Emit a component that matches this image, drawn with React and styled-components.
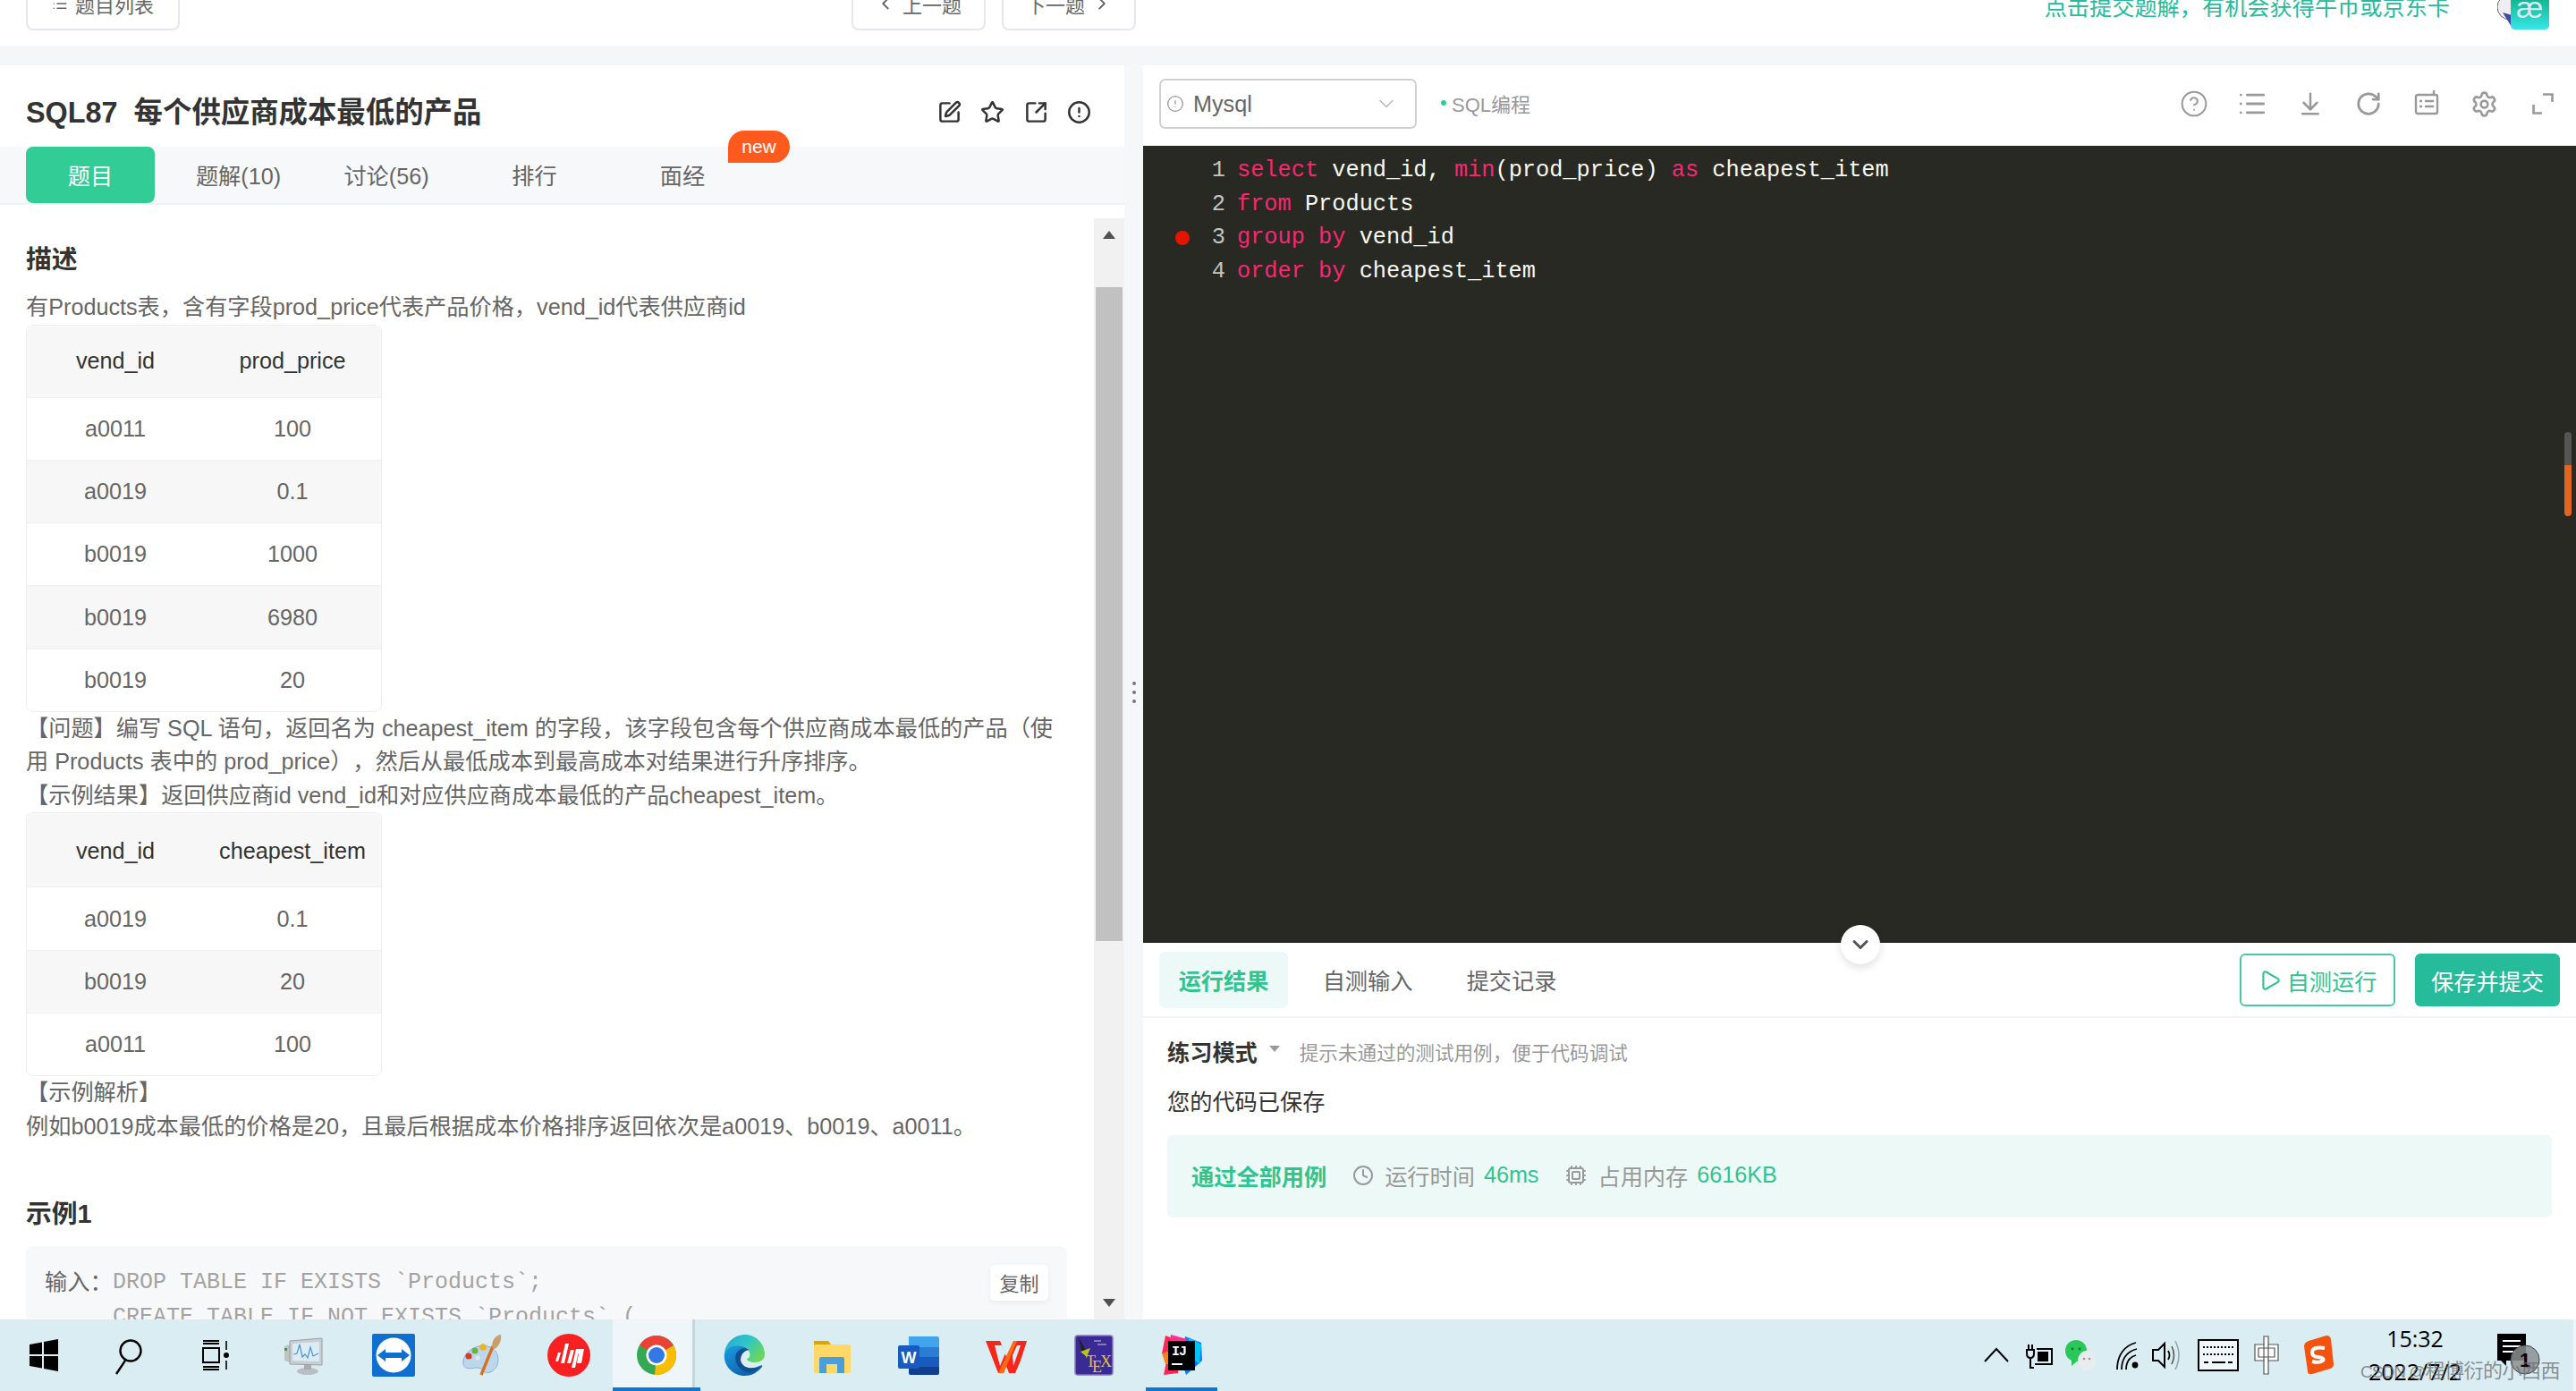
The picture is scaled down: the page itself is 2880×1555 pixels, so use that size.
import React from 'react';
import styled, { createGlobalStyle } from 'styled-components';
import {
  SquarePen, Star, SquareArrowOutUpRight, CircleAlert, CircleHelp, RotateCw, Settings,
  ChevronLeft, ChevronRight, ChevronDown, Play, Clock, Cpu, List, ArrowDownToLine,
} from 'lucide-react';

const Global = createGlobalStyle`
  * { box-sizing: border-box; }
  html, body { margin: 0; padding: 0; height: 100%; overflow: hidden; }
  body { font-family: "Liberation Sans", "Noto Sans CJK SC", sans-serif; background: #f6f7f9; color: #666; text-spacing-trim: space-all; }
`;

const Page = styled.div`
  width: 2880px; height: 1555px; display: flex; flex-direction: column; overflow: hidden; position: relative;
`;

/* top bar */
const TopBar = styled.header`
  height: 51px; flex: none; background: #fff; display: flex; align-items: flex-end; padding: 0 30px 17px 29px; overflow: hidden;
`;
const TopButton = styled.button`
  height: 56px; width: ${p => p.$w}px; flex: none; margin-left: ${p => p.$ml || 0}px; background: #fff;
  border: 2px solid #e6e6ee; border-radius: 8px; color: #666; font: 22px "Liberation Sans", "Noto Sans CJK SC", sans-serif;
  display: flex; align-items: center; justify-content: center; gap: 8px; padding: 0 0 5px;
`;
const Promo = styled.span`
  margin-left: auto; font-size: 25.2px; line-height: 24px; color: #25bb9b; margin-bottom: 14px; white-space: nowrap;
`;
const Avatar = styled.svg`
  width: 58px; height: 33px; margin-left: 53px; margin-bottom: 1px; flex: none; display: block;
`;

/* main */
const Spacer = styled.div` height: 22px; flex: none; background: #f5f6f8; `;
const Main = styled.main`
  flex: 1; min-height: 0; display: grid; grid-template-columns: 1257px 21px 1fr;
`;
const LeftPanel = styled.section` background: #fff; display: flex; flex-direction: column; min-height: 0; `;
const TitleRow = styled.div`
  height: 91px; flex: none; display: flex; align-items: center; justify-content: space-between; padding: 13px 37px 0 29px;
`;
const Title = styled.h1`
  margin: 2px 0 0; font-size: 32.4px; line-height: 40px; font-weight: 700; color: #333; white-space: pre;
`;
const TitleIcons = styled.div` display: flex; gap: 21.5px; color: #333; align-items: center; padding-top: 1px;`;
const Tabs = styled.nav`
  height: 65px; flex: none; background: #f7f8fa; border-bottom: 2px solid #f0f1f3; display: flex; gap: 21.5px; padding-left: 29px;
`;
const Tab = styled.div`
  width: 144px; height: 63px; display: flex; align-items: center; justify-content: center; position: relative; padding-bottom: 2px;
  font-size: 25.2px; border-radius: 8px; color: ${p => (p.$active ? '#fff' : '#666')}; background: ${p => (p.$active ? '#32cc96' : 'transparent')};
`;
const Badge = styled.span`
  position: absolute; left: 123px; top: -18px; width: 69px; height: 36px; background: #ff5a1d; color: #fff; font-size: 21px;
  display: flex; align-items: center; justify-content: center; border-radius: 18px 18px 18px 0;
`;
const BodyRow = styled.div` flex: 1; min-height: 0; display: flex; overflow: hidden; `;
const Article = styled.article`
  width: 1223px; flex: none; padding: 43px 30px 0 29px; overflow: hidden;
`;
const Heading = styled.h2`
  margin: ${p => p.$mt || 0}px 0 ${p => p.$mb || 0}px; font-size: 28.8px; line-height: 37px; font-weight: 700; color: #333;
`;
const Para = styled.p` margin: 0; font-size: 25.2px; line-height: 37.5px; color: #666; `;
const DataTable = styled.table`
  width: 398px; border-collapse: separate; border-spacing: 0; border: 1px solid #eee; border-radius: 8px; font-size: 25.2px; text-align: center; table-layout: fixed;
  th { height: ${p => p.$head}px; font-weight: 400; color: #333; background: #f7f7f7; padding: ${p => p.$pad}px 0 0; }
  td { height: 70.3px; padding: 0; color: #666; border-top: 1px solid #f0f0f0; }
  tr:nth-child(even) td { background: #f7f7f7; }
`;
const CodeBlock = styled.div`
  margin-top: 17px; height: 110px; background: #f7f8fa; border-radius: 8px; position: relative; padding: 21px 0 0 21px; display: flex;
`;
const InputLabel = styled.span` font-size: 25.2px; line-height: 38px; color: #666; width: 76px; flex: none; `;
const Mono = styled.pre`
  margin: 0; font: 25px/39px "Liberation Mono", monospace; color: #a3a3a3;
`;
const CopyBtn = styled.span`
  position: absolute; right: 21px; top: 21px; width: 65px; height: 40px; background: #fff; border-radius: 5px; font-size: 22px; color: #666; padding-bottom: 2px;
  display: flex; align-items: center; justify-content: center; box-shadow: 0 2px 6px rgba(0,0,0,.06);
`;
const ScrollTrack = styled.div`
  width: 34px; flex: none; margin-top: 15px; background: #f1f1f1; display: flex; flex-direction: column; align-items: center;
`;
const ScrollArrow = styled.span`
  width: 0; height: 0; border-left: 7px solid transparent; border-right: 7px solid transparent; flex: none;
  ${p => (p.$down ? 'border-top: 9px solid #505050; margin-top: auto; margin-bottom: 14px;' : 'border-bottom: 9px solid #505050; margin-top: 14px;')}
`;
const ScrollThumb = styled.div` width: 30px; height: 731px; margin-top: 54px; background: #c1c1c1; flex: none; `;

/* splitter */
const Splitter = styled.div`
  background: #f6f7f9; display: flex; flex-direction: column; align-items: center; justify-content: center; gap: 6px;
`;
const Dot = styled.i` width: 4px; height: 4px; border-radius: 50%; background: #777; display: block; `;

/* right */
const RightPanel = styled.section` background: #fff; display: flex; flex-direction: column; min-height: 0; `;
const EditorBar = styled.div`
  height: 90px; flex: none; display: flex; align-items: center; padding: 0 5px 4px 18px;
`;
const SelectBox = styled.div`
  width: 288px; height: 56px; border: 2px solid #d0d0d0; border-radius: 7px; display: flex; align-items: center; padding: 0 18px 0 6px; gap: 10px;
  font-size: 25.2px; color: #666; flex: none;
  svg:last-child { margin-left: auto; color: #bbb; }
`;
const Kind = styled.span`
  margin: 0 0 3px 27px; font-size: 22px; color: #999; display: flex; align-items: center; gap: 6px;
  &::before { content: ''; width: 6px; height: 6px; border-radius: 50%; background: #32ca99; }
`;
const Tools = styled.div` margin-left: auto; display: flex; color: #999; `;
const ToolCell = styled.span`
  width: 65px; flex: none; display: flex; align-items: center; justify-content: center;
  svg { display: block; }
`;
const Editor = styled.div`
  height: 891px; flex: none; background: #282923; padding-top: 9px; position: relative;
`;
const Line = styled.div`
  height: 37.5px; display: flex; align-items: center; font: 25.3px/37.5px "Liberation Mono", monospace; color: #f8f8f2; white-space: pre;
`;
const Gutter = styled.span`
  width: 92px; flex: none; display: flex; align-items: center; padding-left: 36px; color: #c4c4c0; margin-right: 13px;
`;
const LineNo = styled.span` margin-left: auto; `;
const Breakpoint = styled.i` width: 16px; height: 16px; border-radius: 50%; background: #e51400; display: block; `;
const Kw = styled.span` color: #f92672; `;
const Ruler = styled.div`
  position: absolute; right: 5px; top: 320px; width: 8px; height: 94px; border-radius: 4px;
  background: linear-gradient(#555 0, #555 39%, #e2641f 39%, #e2641f 100%);
`;
const ResultBar = styled.div`
  height: 84px; flex: none; display: flex; align-items: center; padding: 0 18px; border-bottom: 2px solid #f2f3f5; position: relative; gap: 17px;
`;
const ResTab = styled.div`
  width: 144px; height: 63px; flex: none; display: flex; align-items: center; justify-content: center; border-radius: 7px; font-size: 25.2px;
  font-weight: ${p => (p.$active ? 700 : 400)}; color: ${p => (p.$active ? '#32c48f' : '#666')}; background: ${p => (p.$active ? '#ecf9f6' : 'transparent')};
`;
const Collapse = styled.div`
  position: absolute; left: 780px; top: -20px; width: 44px; height: 44px; border-radius: 50%; background: #fff; color: #555;
  display: flex; align-items: center; justify-content: center; box-shadow: 0 4px 10px rgba(0,0,0,.12);
`;
const RunBtn = styled.button`
  width: 174px; height: 59px; flex: none; margin-left: auto; background: #fff; border: 2px solid #4cc7a3; border-radius: 6px; color: #32c48f;
  font: 25.2px "Liberation Sans", "Noto Sans CJK SC", sans-serif; display: flex; align-items: center; justify-content: center; gap: 6px; padding: 1px 0 0;
`;
const SubmitBtn = styled.button`
  width: 162px; height: 59px; flex: none; margin-left: 5px; background: #25bb9b; border: 0; border-radius: 6px; color: #fff;
  font: 25.2px "Liberation Sans", "Noto Sans CJK SC", sans-serif; padding: 1px 0 0;
`;
const Result = styled.div` padding: 18px 27px 0 27px; `;
const ModeRow = styled.div` display: flex; align-items: center; height: 38px; `;
const Mode = styled.b` font-size: 25.2px; color: #333; `;
const Caret = styled.i`
  width: 0; height: 0; border-left: 6px solid transparent; border-right: 6px solid transparent; border-top: 7px solid #999; margin: 0 22px 6px 13px; display: block;
`;
const Hint = styled.span` font-size: 21.6px; color: #999; `;
const Saved = styled.div` font-size: 25.2px; color: #333; line-height: 38px; margin-top: 19px; `;
const PassBox = styled.div`
  margin-top: 18px; height: 92px; background: #ecf9f6; border-radius: 6px; display: flex; align-items: center; padding: 0 27px 3px; font-size: 25.2px; color: #999;
`;
const Pass = styled.b` color: #32c48f; margin-right: 29px; `;
const Stat = styled.span`
  display: flex; align-items: center; gap: 10px; margin-right: 30px;
  svg { margin-right: 2px; }
  em { font-style: normal; color: #32c48f; }
`;

/* taskbar */
const Taskbar = styled.footer`
  height: 80px; flex: none; background: #d9edf3; display: flex; align-items: stretch; position: relative; border-right: 3px solid #f1f6f8;
`;
const Slot = styled.div`
  width: 97.85px; flex: none; display: flex; align-items: center; justify-content: center; position: relative;
  background: ${p => (p.$running ? 'linear-gradient(90deg,#eef6f9 0,#eef6f9 91%,#c5d6dc 91%,#c5d6dc 94%,#d9edf3 94%)' : 'transparent')};
  ${p => p.$running && `border-bottom: 4px solid #0a78d4; padding-top: 4px;`}
  ${p => p.$underline && `&::after { content:''; position:absolute; left: 9px; right: 9px; bottom: 0; height: 4px; background:#0a78d4; }`}
  svg { display: block; }
`;
const Tray = styled.div` margin-left: auto; display: flex; align-items: stretch; margin-right: 8px; `;
const TrayItem = styled.div`
  width: ${p => p.$w}px; flex: none; display: flex; align-items: center; justify-content: center; position: relative;
  svg { display: block; overflow: visible; }
`;
const ClockBox = styled.div`
  width: 122px; flex: none; display: flex; flex-direction: column; align-items: center; color: #000; font: 25px/37px "Open Sans", "Liberation Sans", sans-serif; padding-top: 3px; white-space: nowrap;
`;
const Watermark = styled.span`
  position: absolute; right: 15px; bottom: 6px; font-size: 22px; letter-spacing: -0.5px; line-height: 30px; color: rgba(110,110,110,.75); white-space: nowrap;
`;
const WatermarkHandle = styled.span` font-size: 19px; letter-spacing: -1px; `;

const I = ({ children, s = 48, vb = 48 }) => <svg width={s} height={s} viewBox={`0 0 ${vb} ${vb}`} fill="none">{children}</svg>;

const WinIcon = () => (<I><path fill="#000" d="M8 12 L22 9.5 V23 H8Z M24 9 L40 6 V23 H24Z M8 25 H22 V38.5 L8 36Z M24 25 H40 V42 L24 39Z" /></I>);
const SearchIcon = () => (<I><circle cx="23" cy="19" r="11.5" stroke="#000" strokeWidth="2.4" /><path d="M17 30 L7 45" stroke="#000" strokeWidth="2.4" /></I>);
const TaskIcon = () => (<I><path d="M6 8 H24 M6 11 H24 M6 40 H24 M6 37 H24" stroke="#000" strokeWidth="1.8" /><rect x="6" y="16" width="18" height="16" stroke="#000" strokeWidth="2" /><circle cx="32" cy="24" r="3" fill="#000" /><path d="M32 8 V18 M32 30 V40" stroke="#000" strokeWidth="1.6" /></I>);
const MonitorIcon = () => (<I>
  <ellipse cx="26" cy="42" rx="12" ry="4" fill="#b9bec2" /><rect x="22" y="34" width="8" height="6" fill="#a8adb1" />
  <path d="M0 14 L6 12 V32 L0 30Z" fill="#bfc3c6" /><path d="M0 16h3v3H0z" fill="#3a9b3a" />
  <path d="M6 8 L42 5 V35 L6 34Z" fill="#c9ced2" stroke="#9aa0a5" /><path d="M9 11 L39 9 V31 L9 30Z" fill="#dcecf7" />
  <path d="M10 23 L14 22 L17 12 L20 26 L23 23 L26 27 L29 15 L32 25 L38 22" stroke="#4d94d0" strokeWidth="1.2" />
</I>);
const TeamViewerIcon = () => (<I>
  <rect width="48" height="48" rx="2" fill="#0e6fd1" /><circle cx="24" cy="24" r="19.5" fill="#fff" />
  <path fill="#0e6fd1" d="M6 24 L15 17 V21 H33 V17 L42 24 L33 31 V27 H15 V31Z" />
</I>);
const PaintIcon = () => (<I>
  <path d="M4 30 C6 18 22 10 34 15 C46 20 46 38 34 43 C26 46 26 38 20 38 C14 38 2 42 4 30Z" fill="#bcd6ec" stroke="#8fb0ca" />
  <circle cx="10" cy="25" r="3.6" fill="#d93a2b" /><circle cx="17" cy="19" r="3.6" fill="#6cb33f" /><circle cx="26" cy="15" r="3.8" fill="#eeb421" /><circle cx="20" cy="27" r="2.6" fill="#dfe7ee" />
  <path d="M24 46 L37 14" stroke="#d9701c" strokeWidth="3.4" />
  <path d="M36 15 C36 8 39 2 46 1 C47 7 44 14 39 17Z" fill="#c9a06c" />
</I>);
const DlpIcon = () => (<I>
  <circle cx="24" cy="24" r="24" fill="#f92022" />
  <path fill="#fff" d="M9 31 L12 21 H15 L12 31Z M15 33 L20 11 H24 L19 33Z M22 33 L26 18 H30 L26 33Z M27 38 L32 17 H41 L38 33 H33 L35 22 H34.5 L31 38Z" />
</I>);
const ChromeIcon = () => (<I>
  <circle cx="24" cy="24" r="22" fill="#34a853" />
  <path fill="#ea4335" d="M24 24 L5 13 A22 22 0 0 1 43 13Z" />
  <path fill="#fbbc04" d="M24 24 L43 13 A22 22 0 0 1 22 46Z" />
  <circle cx="24" cy="24" r="11.5" fill="#fff" /><circle cx="24" cy="24" r="9" fill="#3278e6" />
</I>);
const EdgeIcon = () => (<I>
  <defs>
    <linearGradient id="eg1" x1="0" y1="0" x2="1" y2="0.6"><stop offset="0" stopColor="#1fa6dc" /><stop offset="0.55" stopColor="#31c8c4" /><stop offset="1" stopColor="#6ad65e" /></linearGradient>
    <linearGradient id="eg2" x1="0" y1="0" x2="0.7" y2="1"><stop offset="0" stopColor="#1b9de2" /><stop offset="1" stopColor="#0c5ea8" /></linearGradient>
  </defs>
  <path fill="url(#eg1)" d="M2 22 C3 10 13 1 25 1 C37 1 47 11 47 23 C47 29 42 32 36 32 C31 32 27 30 27 28 C30 27 31 24 30 21 C28 15 21 12 14 14 C8 16 4 19 2 22Z" />
  <path fill="url(#eg2)" d="M2 22 C0 36 12 47 24 47 C32 47 38 44 44 37 C45 35 43 35 41 36 C33 40 22 39 20 30 C19 24 22 19 29 18 C20 10 6 13 2 22Z" />
  <path fill="#0f4f92" d="M20 30 C20 24 23 19 29 18 C25 15 19 16 15 22 C12 30 17 40 27 43 C30 44 36 43 41 37 C33 40 22 39 20 30Z" />
</I>);
const FolderIcon = () => (<I>
  <path fill="#e0a400" d="M4 8 H20 L23 12 L20 15 H4Z" /><rect x="4" y="12" width="41" height="32" rx="2" fill="#ffd868" />
  <path fill="#4c9ed9" d="M10 44 V28 Q10 26 12 26 H36 Q38 26 38 28 V44 H30 V34 H18 V44Z" />
</I>);
const WordIcon = () => (<I>
  <path fill="#41a5ee" d="M13 3 H45 Q47 3 47 5 V15 H13Z" /><rect x="13" y="15" width="34" height="11" fill="#2b7cd3" /><rect x="13" y="26" width="34" height="11" fill="#185abd" /><path fill="#103f91" d="M13 37 H47 V44 Q47 46 45 46 H15 Q13 46 13 44Z" />
  <rect x="1" y="13" width="24" height="26" rx="2" fill="#185abd" />
  <text x="13" y="32.5" textAnchor="middle" fontFamily="Liberation Sans" fontWeight="700" fontSize="18" fill="#fff">W</text>
</I>);
const WpsIcon = () => (<I>
  <path fill="#f8251b" d="M1 8 H17 L25 28 L32 8 H47 L40 30 L34 44 H27 L24 36 L21 44 H15 Z" />
  <path fill="#d9edf3" d="M11 13 H19 L23 22 L17 36Z M31 24 L36 13 H40 L32 36Z" />
  <path fill="#ff6a13" d="M15 44 L32 8 H36 L21 44Z" />
</I>);
const TexIcon = () => (<I>
  <rect x="3" y="2" width="42" height="44" rx="3" fill="#3a2a96" stroke="#8a78c0" strokeWidth="1.5" />
  <path d="M7 4 L16 20 L10 20 Z" fill="#222" /><path d="M9 20 L20 16 L16 26Z" fill="#b8c420" />
  <path d="M24 8h8M28 12h10" stroke="#ccc" strokeWidth="1" />
  <text x="15" y="37" fontFamily="Liberation Serif" fontSize="18" fill="#e2c51c">T</text>
  <text x="22" y="43" fontFamily="Liberation Serif" fontSize="18" fill="#e2c51c">E</text>
  <text x="31" y="37" fontFamily="Liberation Serif" fontSize="18" fill="#e2c51c">X</text>
</I>);
const IdeaIcon = () => (<I>
  <path fill="#087cfa" d="M28 3 L46 10 L47 30 L29 46 L24 30Z" />
  <path fill="#07c3f2" d="M32 4 L46 12 L44 34 L30 22Z" />
  <path fill="#fe2857" d="M6 2 L22 8 L20 44 L4 46 L8 26 L2 22Z" /><path fill="#fc801d" d="M2 22 L14 18 L16 34 L6 34Z" /><path fill="#ff318c" d="M12 1 L30 6 L26 20 L10 14Z" />
  <rect x="9" y="8" width="30" height="33" fill="#000" />
  <text x="13" y="24" fontFamily="Liberation Mono" fontWeight="700" fontSize="15" fill="#fff" letterSpacing="-1">IJ</text>
  <rect x="13" y="33" width="12" height="2" fill="#fff" />
</I>);

const Chevron = () => (<svg width="28" height="16" viewBox="0 0 28 16"><path d="M1 15 L14 1 L27 15" fill="none" stroke="#000" strokeWidth="2" /></svg>);
const Plug = () => (<svg width="32" height="32" viewBox="0 0 32 32" fill="none" stroke="#000" strokeWidth="2"><path d="M2 10 H10 V14 Q10 19 6 19 Q2 19 2 14Z M4 10 V4 M8 10 V4 M6 19 V30 H10" /><path d="M13 9 H30 V26 H11" /><rect x="14" y="12" width="12" height="11" fill="#000" stroke="none" /></svg>);
const WeChat = () => (<svg width="34" height="36" viewBox="0 0 34 36"><ellipse cx="12" cy="13" rx="12" ry="12" fill="#2bc75a" /><path d="M7 23 L7 30 L14 24Z" fill="#2bc75a" /><ellipse cx="24" cy="24" rx="10" ry="11" fill="#e9eced" /><circle cx="21" cy="22" r="1.3" fill="#999" /><circle cx="27" cy="22" r="1.3" fill="#999" /><circle cx="8" cy="11" r="1.4" fill="#0a7a30" /><circle cx="16" cy="11" r="1.4" fill="#0a7a30" /></svg>);
const Wifi = () => (<svg width="26" height="34" viewBox="0 0 26 34" fill="none" stroke="#000" strokeWidth="1.8"><path d="M1 33 C1 16 10 6 22 3" /><path d="M6 33 C6 21 12 13 23 10" /><path d="M11 33 C11 25 15 19 22 17" /><circle cx="21" cy="28" r="3.4" fill="#000" stroke="none" /></svg>);
const Vol = () => (<svg width="32" height="38" viewBox="0 0 32 38" fill="none"><path d="M1 13 H7 L14 6 V32 L7 25 H1Z" stroke="#000" strokeWidth="2" /><path d="M18 14 Q21 19 18 24" stroke="#000" strokeWidth="1.8" /><path d="M22 9 Q27 19 22 29" stroke="#555" strokeWidth="1.6" /><path d="M26 3 Q34 19 26 35" stroke="#9aa5aa" strokeWidth="1.6" /></svg>);
const Keyboard = () => (<svg width="46" height="36" viewBox="0 0 46 36" fill="none"><rect x="1" y="1" width="44" height="34" stroke="#000" strokeWidth="2" fill="#eef7fa" /><path d="M6 9 H40 M6 17 H40" stroke="#000" strokeWidth="2" strokeDasharray="2 2" /><path d="M7 26 H12 M16 26 H31 M34 26 H39" stroke="#000" strokeWidth="2" /></svg>);
const Zhong = () => (<svg width="28" height="44" viewBox="0 0 28 44" fill="#fff" stroke="#555" strokeWidth="1.2"><path d="M11 1 H16 V10 H27 V28 H16 V43 H11 V28 H1 V10 H11Z" /><path d="M5 14 H23 V24 H5Z M11 10 V28 M16 10 V28" fill="none" /></svg>);
const Sogou = () => (<svg width="34" height="44" viewBox="0 0 34 44"><path d="M6 6 L26 0 Q30 0 31 4 L34 32 Q34 36 30 37 L10 43 Q5 44 5 40 L1 12 Q1 8 6 6Z" fill="#f4530e" /><path d="M24 14 Q10 12 10 19 Q10 24 17 24 Q24 25 22 28 Q18 31 10 29" fill="none" stroke="#fff" strokeWidth="4" /></svg>);
const Notify = () => (<svg width="50" height="48" viewBox="0 0 50 48"><path d="M2 0 H34 V30 H12 L12 36 L6 30 H2Z" fill="#000" /><path d="M8 8 H28 M8 14 H28 M8 20 H22" stroke="#fff" strokeWidth="2" /><circle cx="33" cy="29" r="16" fill="#8a8f92" fillOpacity=".85" stroke="#444" /><text x="33" y="37" textAnchor="middle" fontSize="22" fontWeight="700" fontFamily="Liberation Sans" fill="#000">1</text></svg>);

const ListTool = () => <List size={34} strokeWidth={2} />;
const KeyboardTool = () => (<svg width="28" height="30" viewBox="0 0 28 30" fill="none" stroke="#999" strokeWidth="2.4"><path d="M22 0 V5" /><rect x="2" y="5" width="24" height="21" rx="2" /><path d="M6 12 H9 M12 12 H22 M6 18 H9 M12 18 H22" /></svg>);
const FullIcon = () => (<svg width="24" height="24" viewBox="0 0 24 24" fill="none" stroke="#999" strokeWidth="2.6"><path d="M12 1.5 H22.5 V10 M1.5 13 V22.5 H11" /></svg>);

const Rows1 = [['a0011', '100'], ['a0019', '0.1'], ['b0019', '1000'], ['b0019', '6980'], ['b0019', '20']];
const Rows2 = [['a0019', '0.1'], ['b0019', '20'], ['a0011', '100']];

const Table = ({ head, rows, headH, pad }) => (
  <DataTable $head={headH} $pad={pad}>
    <thead><tr>{head.map(h => <th key={h}>{h}</th>)}</tr></thead>
    <tbody>{rows.map((r, i) => <tr key={i}>{r.map((c, j) => <td key={j}>{c}</td>)}</tr>)}</tbody>
  </DataTable>
);

export default function App() {
  return (
    <Page>
      <Global />
      <TopBar>
        <TopButton $w={172}><List size={18} />题目列表</TopButton>
        <TopButton $w={150} $ml={751}><ChevronLeft size={22} />上一题</TopButton>
        <TopButton $w={150} $ml={18}>下一题<ChevronRight size={22} /></TopButton>
        <Promo>点击提交题解，有机会获得牛币或京东卡</Promo>
        <Avatar viewBox="0 0 58 33">
          <circle cx="14" cy="8" r="14" fill="#eeeef2" stroke="#666" strokeWidth="1" /><path d="M6 14 L16 30 L20 18Z" fill="#3a4aa0" />
          <defs><linearGradient id="av" x1="0" y1="0" x2="0" y2="1"><stop offset="0" stopColor="#12b892" /><stop offset="1" stopColor="#38e6e6" /></linearGradient></defs>
          <path d="M15 0 H58 V28 Q58 33 53 33 H20 Q15 33 15 28Z" fill="url(#av)" />
          <text x="36" y="20" textAnchor="middle" fontFamily="Liberation Sans" fontSize="34" fill="#dfe8f2">æ</text>
        </Avatar>
      </TopBar>
      <Spacer />
      <Main>
        <LeftPanel>
          <TitleRow>
            <Title>SQL87  每个供应商成本最低的产品</Title>
            <TitleIcons>
              <SquarePen size={27} strokeWidth={2.2} />
              <Star size={27} strokeWidth={2.2} />
              <SquareArrowOutUpRight size={27} strokeWidth={2.2} />
              <CircleAlert size={27} strokeWidth={2.2} />
            </TitleIcons>
          </TitleRow>
          <Tabs>
            <Tab $active>题目</Tab>
            <Tab>题解(10)</Tab>
            <Tab>讨论(56)</Tab>
            <Tab>排行</Tab>
            <Tab>面经<Badge>new</Badge></Tab>
          </Tabs>
          <BodyRow>
            <Article>
              <Heading $mb={16}>描述</Heading>
              <Para>有Products表，含有字段prod_price代表产品价格，vend_id代表供应商id</Para>
              <Table head={['vend_id', 'prod_price']} rows={Rows1} headH={80} pad={0} />
              <Para>【问题】编写 SQL 语句，返回名为 cheapest_item 的字段，该字段包含每个供应商成本最低的产品（使用 Products 表中的 prod_price），然后从最低成本到最高成本对结果进行升序排序。<br />【示例结果】返回供应商id vend_id和对应供应商成本最低的产品cheapest_item。</Para>
              <Table head={['vend_id', 'cheapest_item']} rows={Rows2} headH={82} pad={2} />
              <Para>【示例解析】<br />例如b0019成本最低的价格是20，且最后根据成本价格排序返回依次是a0019、b0019、a0011。</Para>
              <Heading $mt={61}>示例1</Heading>
              <CodeBlock>
                <InputLabel>输入：</InputLabel>
                <Mono>{'DROP TABLE IF EXISTS `Products`;\nCREATE TABLE IF NOT EXISTS `Products` ('}</Mono>
                <CopyBtn>复制</CopyBtn>
              </CodeBlock>
            </Article>
            <ScrollTrack>
              <ScrollArrow />
              <ScrollThumb />
              <ScrollArrow $down />
            </ScrollTrack>
          </BodyRow>
        </LeftPanel>
        <Splitter><Dot /><Dot /><Dot /></Splitter>
        <RightPanel>
          <EditorBar>
            <SelectBox><CircleAlert size={20} color="#999" strokeWidth={1.6} />Mysql<ChevronDown size={28} strokeWidth={1.4} /></SelectBox>
            <Kind>SQL编程</Kind>
            <Tools>
              <ToolCell><CircleHelp size={32} strokeWidth={1.5} /></ToolCell>
              <ToolCell><ListTool /></ToolCell>
              <ToolCell><ArrowDownToLine size={30} strokeWidth={2} /></ToolCell>
              <ToolCell><RotateCw size={30} strokeWidth={2.2} /></ToolCell>
              <ToolCell><KeyboardTool /></ToolCell>
              <ToolCell><Settings size={31} strokeWidth={2} /></ToolCell>
              <ToolCell><FullIcon /></ToolCell>
            </Tools>
          </EditorBar>
          <Editor>
            <Line><Gutter><LineNo>1</LineNo></Gutter><span><Kw>select</Kw> vend_id, <Kw>min</Kw>(prod_price) <Kw>as</Kw> cheapest_item</span></Line>
            <Line><Gutter><LineNo>2</LineNo></Gutter><span><Kw>from</Kw> Products</span></Line>
            <Line><Gutter><Breakpoint /><LineNo>3</LineNo></Gutter><span><Kw>group by</Kw> vend_id</span></Line>
            <Line><Gutter><LineNo>4</LineNo></Gutter><span><Kw>order by</Kw> cheapest_item</span></Line>
            <Ruler />
          </Editor>
          <ResultBar>
            <ResTab $active>运行结果</ResTab>
            <ResTab>自测输入</ResTab>
            <ResTab>提交记录</ResTab>
            <Collapse><ChevronDown size={28} strokeWidth={2.6} /></Collapse>
            <RunBtn><Play size={26} strokeWidth={2} />自测运行</RunBtn>
            <SubmitBtn>保存并提交</SubmitBtn>
          </ResultBar>
          <Result>
            <ModeRow><Mode>练习模式</Mode><Caret /><Hint>提示未通过的测试用例，便于代码调试</Hint></ModeRow>
            <Saved>您的代码已保存</Saved>
            <PassBox>
              <Pass>通过全部用例</Pass>
              <Stat><Clock size={24} strokeWidth={2} />运行时间 <em>46ms</em></Stat>
              <Stat><Cpu size={24} strokeWidth={2} />占用内存 <em>6616KB</em></Stat>
            </PassBox>
          </Result>
        </RightPanel>
      </Main>
      <Taskbar>
        <Slot><WinIcon /></Slot>
        <Slot><SearchIcon /></Slot>
        <Slot><TaskIcon /></Slot>
        <Slot><MonitorIcon /></Slot>
        <Slot><TeamViewerIcon /></Slot>
        <Slot><PaintIcon /></Slot>
        <Slot><DlpIcon /></Slot>
        <Slot $running><ChromeIcon /></Slot>
        <Slot><EdgeIcon /></Slot>
        <Slot><FolderIcon /></Slot>
        <Slot><WordIcon /></Slot>
        <Slot><WpsIcon /></Slot>
        <Slot><TexIcon /></Slot>
        <Slot $underline><IdeaIcon /></Slot>
        <Tray>
          <TrayItem $w={54}><Chevron /></TrayItem>
          <TrayItem $w={42}><Plug /></TrayItem>
          <TrayItem $w={50}><WeChat /></TrayItem>
          <TrayItem $w={56}><Wifi /></TrayItem>
          <TrayItem $w={30}><Vol /></TrayItem>
          <TrayItem $w={86}><Keyboard /></TrayItem>
          <TrayItem $w={22}><Zhong /></TrayItem>
          <TrayItem $w={94}><Sogou /></TrayItem>
          <ClockBox><span>15:32</span><span>2022/7/2</span></ClockBox>
          <TrayItem $w={108}><Notify /></TrayItem>
        </Tray>
        <Watermark><WatermarkHandle>CSDN @</WatermarkHandle>程博衍的小西西</Watermark>
      </Taskbar>
    </Page>
  );
}
